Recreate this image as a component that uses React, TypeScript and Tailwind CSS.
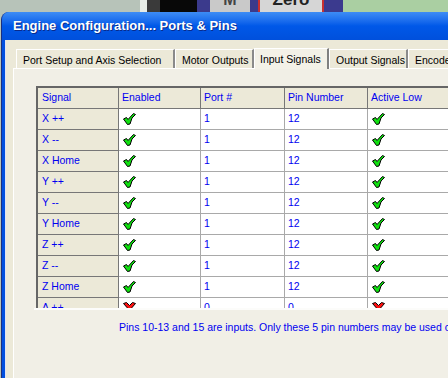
import React from 'react'

const font = { fontFamily: '"Liberation Sans", Arial, sans-serif' }

const rows = [
  { name: 'X ++', on: true, port: '1', pin: '12' },
  { name: 'X --', on: true, port: '1', pin: '12' },
  { name: 'X Home', on: true, port: '1', pin: '12' },
  { name: 'Y ++', on: true, port: '1', pin: '12' },
  { name: 'Y --', on: true, port: '1', pin: '12' },
  { name: 'Y Home', on: true, port: '1', pin: '12' },
  { name: 'Z ++', on: true, port: '1', pin: '12' },
  { name: 'Z --', on: true, port: '1', pin: '12' },
  { name: 'Z Home', on: true, port: '1', pin: '12' },
  { name: 'A ++', on: false, port: '0', pin: '0' },
]

const Check = () => (
  <svg width="13" height="12" viewBox="0 0 13 12">
    <polygon
      points="0.5,6 3.5,4.5 5,6.5 10.5,0.5 12.5,1.5 9,5 7,11 4.5,11.5"
      fill="#10e010"
      stroke="#000"
      strokeWidth="1"
      strokeLinejoin="round"
    />
  </svg>
)

const Cross = () => (
  <svg width="13" height="12" viewBox="0 0 13 12">
    <polygon
      points="0.5,1.5 3.5,0.5 6.5,3.5 9.5,0.5 12.5,1.5 9,5.5 11,9 8,10.5 6.5,8 4,11 1.5,9.5 4,5.5"
      fill="#ff1010"
      stroke="#000"
      strokeWidth="1"
      strokeLinejoin="round"
    />
  </svg>
)

const tabs = [
  { label: 'Port Setup and Axis Selection', w: 'w-[159px]' },
  { label: 'Motor Outputs', w: 'w-[79px]' },
  { label: 'Input Signals', w: 'w-[75px]', active: true },
  { label: 'Output Signals', w: 'w-[79px]' },
  { label: 'Encoder/MPG\'s', w: 'w-[90px]' },
]

export default function App() {
  return (
    <div className="w-[448px] h-[378px] overflow-hidden bg-[#b7c3b9] text-[10.5px]" style={font}>
      {/* desktop behind the dialog */}
      <div className="flex h-[12px]">
        <div className="w-[140px] bg-[#b7c3b9]" />
        <div className="w-[7px] bg-[#e6ebe6]" />
        <div className="w-[13px] bg-[#3a3a3a]" />
        <div className="w-[37px] bg-[#080808]" />
        <div className="w-[13px] bg-[#3b3a8c]" />
        <div className="w-[40px] bg-[#c9c9c9] overflow-hidden">
          <div className="-mt-[9px] text-center text-[16px] font-bold text-[#444] leading-[18px]">M</div>
        </div>
        <div className="w-[8px] bg-[#3b3a8c]" />
        <div className="w-[2px] bg-[#c83030]" />
        <div className="w-[62px] bg-[#d6d6d6] overflow-hidden">
          <div className="-mt-[10px] text-center text-[17px] font-bold text-[#222] leading-[19px]">Zero</div>
        </div>
        <div className="w-[2px] bg-[#c83030]" />
        <div className="w-[19px] bg-[#3b3a8e]" />
        <div className="flex-1 bg-[#aacfa2]" />
      </div>

      {/* dialog window */}
      <div className="ml-[1px] w-[470px] h-[366px] rounded-tl-[8px] overflow-hidden bg-[#0050e0] border-l border-[#1a2f80] flex flex-col">
        <div className="h-[28px] shrink-0 flex items-center pl-[11px] bg-gradient-to-b from-[#3d8cf5] via-[#0058e8] to-[#0050dc]">
          <span className="text-white font-bold text-[13px] [text-shadow:1px_1px_0_#0a2a8a]">
            Engine Configuration... Ports &amp; Pins
          </span>
        </div>

        <div className="flex-1 ml-[3px] bg-[#ece9d8] border-l border-[#dfe3f5] pt-[7px]">
          {/* tabs */}
          <div className="flex items-end h-[21px] pl-[10px]">
            {tabs.map((t) =>
              t.active ? (
                <div
                  key={t.label}
                  className={`${t.w} h-[21px] shrink-0 bg-[#f3f1e7] border-t border-l border-white border-r-2 border-r-[#808080] pl-[5px] pt-[3px] text-black relative z-10 -mb-px`}
                >
                  {t.label}
                </div>
              ) : (
                <div
                  key={t.label}
                  className={`${t.w} h-[19px] shrink-0 border-t border-l border-white border-r-2 border-r-[#8a8a8a] pl-[6px] pt-[3px] text-black whitespace-nowrap overflow-hidden`}
                >
                  {t.label}
                </div>
              )
            )}
          </div>

          {/* tab panel */}
          <div className="ml-[7px] h-[318px] bg-[#f1efe6] border-t border-l border-white">
            <div className="pl-[22px] pt-[17px]">
              <div className="h-[222px] overflow-hidden border-t-2 border-l-2 border-[#666]">
                <div className="flex h-[21px] bg-[#ece9d8] border-b border-[#777]">
                  <div className="w-[81px] shrink-0 border-r border-[#777] pl-[4px] flex items-center text-[#0000f0]">Signal</div>
                  <div className="w-[82px] shrink-0 border-r border-[#777] pl-[3px] flex items-center text-[#0000f0]">Enabled</div>
                  <div className="w-[84px] shrink-0 border-r border-[#777] pl-[3px] flex items-center text-[#0000f0]">Port #</div>
                  <div className="w-[83px] shrink-0 border-r border-[#777] pl-[3px] flex items-center text-[#0000f0]">Pin Number</div>
                  <div className="flex-1 pl-[3px] flex items-center text-[#0000f0]">Active Low</div>
                </div>
                {rows.map((r) => (
                  <div key={r.name} className="flex h-[21px]">
                    <div className="w-[81px] shrink-0 bg-[#ece9d8] border-r border-b border-[#777] pl-[4px] flex items-center text-[#0000f0]">
                      {r.name}
                    </div>
                    <div className="w-[82px] shrink-0 bg-white border-r border-b border-[#a9a9a9] pl-[4px] flex items-center">
                      {r.on ? <Check /> : <Cross />}
                    </div>
                    <div className="w-[84px] shrink-0 bg-white border-r border-b border-[#a9a9a9] pl-[3px] flex items-center text-[#0000f0]">
                      {r.port}
                    </div>
                    <div className="w-[83px] shrink-0 bg-white border-r border-b border-[#a9a9a9] pl-[3px] flex items-center text-[#0000f0]">
                      {r.pin}
                    </div>
                    <div className="flex-1 bg-white border-b border-[#a9a9a9] pl-[4px] flex items-center">
                      {r.on ? <Check /> : <Cross />}
                    </div>
                  </div>
                ))}
              </div>
            </div>
            <div className="ml-[20px] h-[2px] bg-white/80" />
            <div className="pl-[105px] pt-[10px] whitespace-nowrap text-[#0000f0] text-[10.5px]">
              Pins 10-13 and 15 are inputs. Only these 5 pin numbers may be used on this screen
            </div>
          </div>
        </div>
      </div>
    </div>
  )
}
